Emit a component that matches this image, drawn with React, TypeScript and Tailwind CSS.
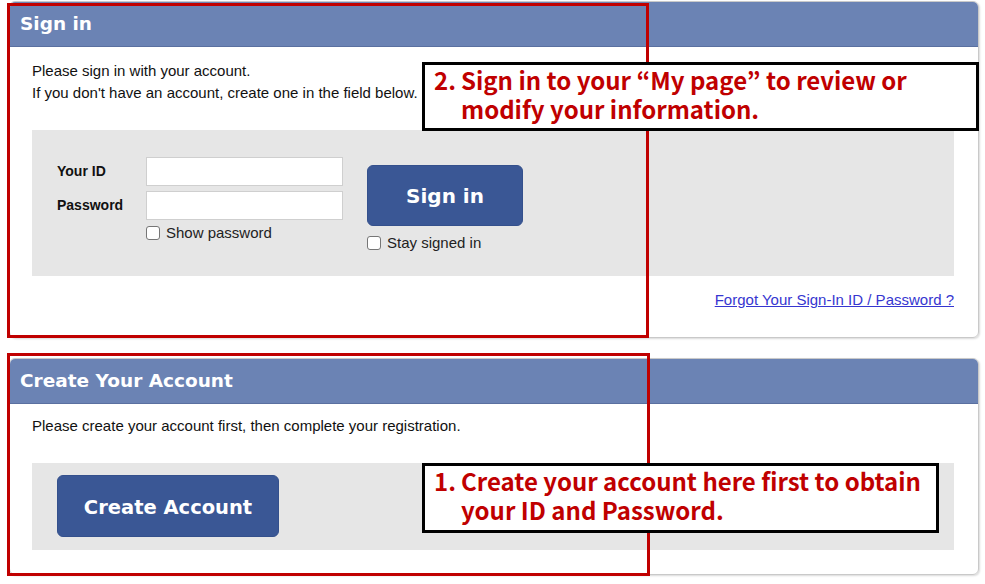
const body = "font-['Liberation_Sans',Arial,sans-serif]";
const heading = "font-['DejaVu_Sans',Verdana,sans-serif]";
const note = "font-['Noto_Sans_CJK_JP','Noto_Sans',sans-serif]";

function Checkbox({ label }: { label: string }) {
  return (
    <label className="flex items-center gap-[6px] text-[15px] text-[#222]">
      <span className="w-[14px] h-[14px] rounded-[3px] border border-[#767676] bg-white" />
      {label}
    </label>
  );
}

function CardHeader({ title }: { title: string }) {
  return (
    <div className="h-[45px] bg-[#6b83b4] rounded-t-[5px] border-b border-[#5a70a0] flex items-center px-[10px]">
      <h2 className={`${heading} text-white font-bold text-[18.5px]`}>{title}</h2>
    </div>
  );
}

export default function App() {
  return (
    <div className={`${body} relative w-[985px] h-[584px] bg-white overflow-hidden`}>
      <div className="flex flex-col gap-[20px] pt-px pl-[9px] pr-[6px]">
        {/* Sign in card */}
        <section className="h-[337px] border border-[#c9c9c9] rounded-[6px] shadow-[1px_1px_2px_rgba(0,0,0,0.15)]">
          <CardHeader title="Sign in" />
          <div className="pl-[22px] pr-[24px] pt-[13px]">
            <p className="w-fit text-[15px] leading-[22px] text-[#111]">
              Please sign in with your account.
              <br />
              If you don't have an account, create one in the field below.
            </p>
            <div className="mt-[26px] h-[146px] bg-[#e6e6e6] pl-[25px] pt-[27px] flex gap-[24px]">
              <div className="flex flex-col">
                <div className="flex items-center gap-[3px]">
                  <span className="w-[86px] font-bold text-[14px] text-[#111]">Your ID</span>
                  <span className="w-[197px] h-[29px] bg-white border border-[#cfcfcf]" />
                </div>
                <div className="flex items-center gap-[3px] mt-[5px]">
                  <span className="w-[86px] font-bold text-[14px] text-[#111]">Password</span>
                  <span className="w-[197px] h-[29px] bg-white border border-[#cfcfcf]" />
                </div>
                <div className="ml-[89px] mt-[2px]">
                  <Checkbox label="Show password" />
                </div>
              </div>
              <div className="flex flex-col pt-[8px]">
                <button className={`${heading} w-[156px] h-[61px] rounded-[6px] bg-[#3a5795] border border-[#34508c] text-white font-bold text-[20px]`}>
                  Sign in
                </button>
                <div className="mt-[6px]">
                  <Checkbox label="Stay signed in" />
                </div>
              </div>
            </div>
            <div className="flex justify-end pt-[13px]">
              <a href="#" className="text-[15px] text-[#3636d0] underline">
                Forgot Your Sign-In ID / Password ?
              </a>
            </div>
          </div>
        </section>

        {/* Create account card */}
        <section className="h-[217px] border border-[#c9c9c9] rounded-[6px] shadow-[1px_1px_2px_rgba(0,0,0,0.15)]">
          <CardHeader title="Create Your Account" />
          <div className="pl-[22px] pr-[24px] pt-[12px]">
            <p className="w-fit text-[15px] leading-[20px] text-[#111]">
              Please create your account first, then complete your registration.
            </p>
            <div className="mt-[27px] h-[87px] bg-[#e6e6e6] pl-[25px] pt-[12px]">
              <button className={`${heading} w-[222px] h-[62px] pt-[4px] rounded-[6px] bg-[#3a5795] border border-[#34508c] text-white font-bold text-[19.5px]`}>
                Create Account
              </button>
            </div>
          </div>
        </section>
      </div>

      {/* red highlight frames */}
      <div className="absolute left-[7px] top-[3px] w-[642px] h-[335px] border-[3px] border-[#c00000]" />
      <div className="absolute left-[7px] top-[353px] w-[643px] h-[223px] border-[3px] border-[#c00000]" />

      {/* callouts */}
      <div className={`${note} absolute left-[422px] top-[62px] w-[557px] h-[69px] bg-white border-[3px] border-black pl-[9px] text-[#c00000] text-[24px] leading-[29px] font-bold`}>
        <div className="flex">
          <span className="w-[27px]">2.</span>
          <span>
            Sign in to your “My page” to review or
            <br />
            modify your information.
          </span>
        </div>
      </div>
      <div className={`${note} absolute left-[422px] top-[463px] w-[517px] h-[70px] bg-white border-[3px] border-black pl-[9px] text-[#c00000] text-[24px] leading-[29px] font-bold`}>
        <div className="flex">
          <span className="w-[27px]">1.</span>
          <span>
            Create your account here first to obtain
            <br />
            your ID and Password.
          </span>
        </div>
      </div>
    </div>
  );
}
